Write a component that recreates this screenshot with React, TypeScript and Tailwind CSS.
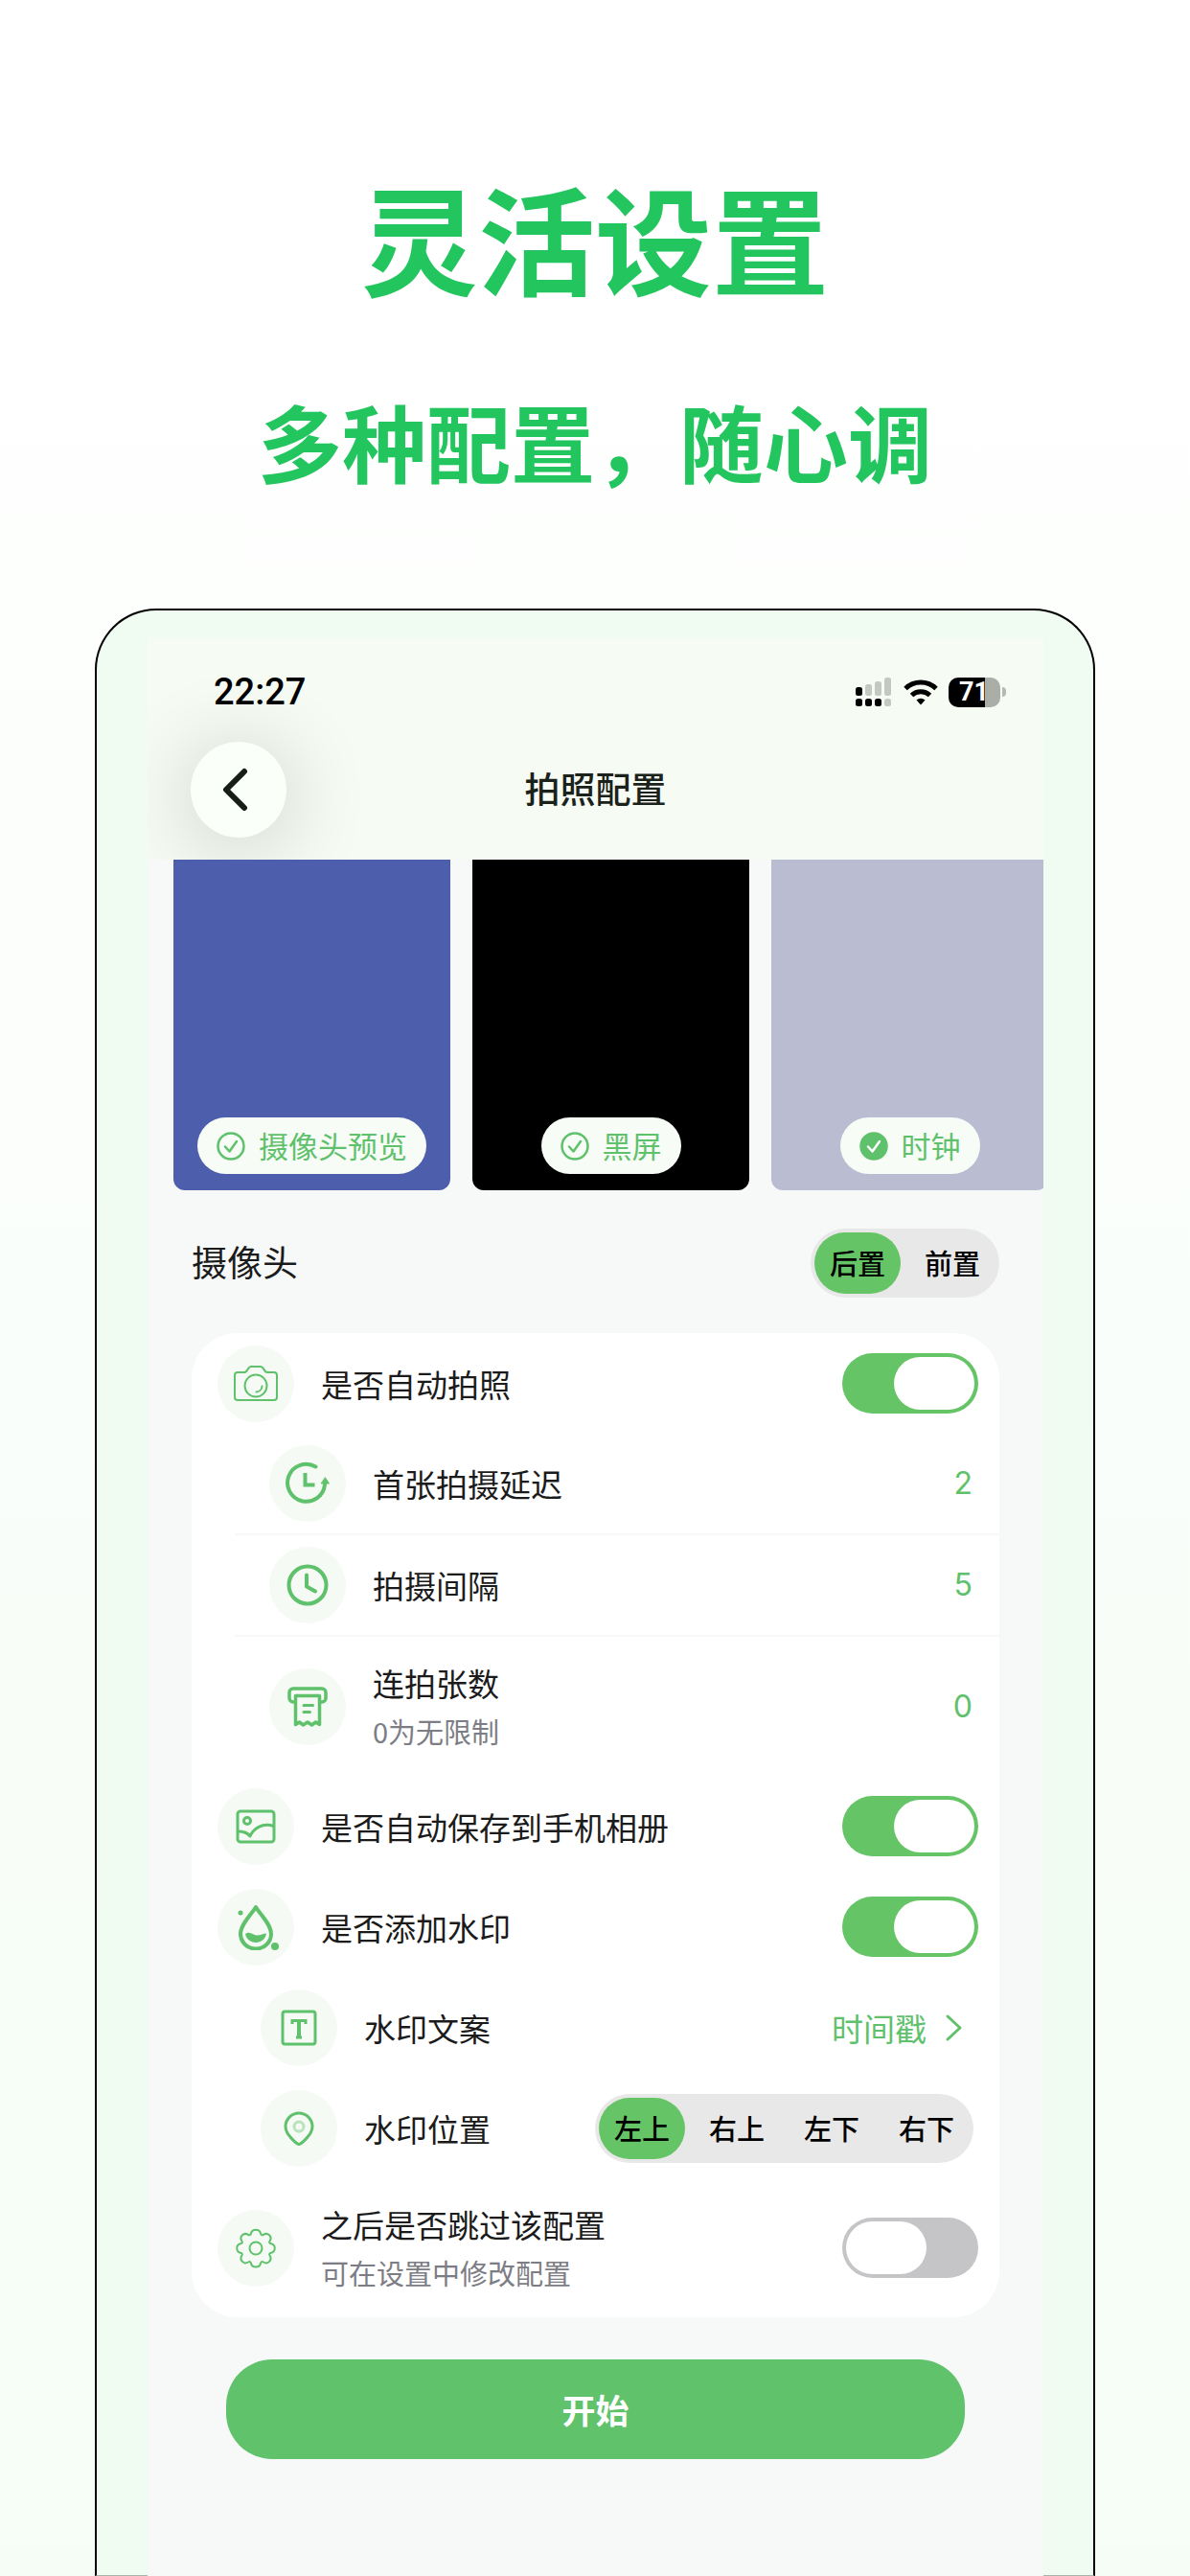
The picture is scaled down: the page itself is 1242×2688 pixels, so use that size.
import React, { useState } from 'react';
import { clsx } from 'clsx';

type IconProps = { children: React.ReactNode };

const IconBadge = ({ children }: IconProps) => (
  <div className="flex size-20 shrink-0 items-center justify-center rounded-full bg-[#f5faf4] text-[#5fc16c]">
    <svg viewBox="0 0 48 48" className="size-12" fill="none" stroke="currentColor" strokeLinecap="round" strokeLinejoin="round" aria-hidden="true">
      {children}
    </svg>
  </div>
);

const CameraIcon = () => (
  <IconBadge>
    <g strokeWidth="2">
      <path d="M5 12h7c2 0 2.500-1 3.500-3s2-3 4-3h9c2 0 3 1 4 3s1.500 3 3.500 3h7a3 3 0 0 1 3 3v23a3 3 0 0 1-3 3H5a3 3 0 0 1-3-3V15a3 3 0 0 1 3-3z" />
      <circle cx="24" cy="26" r="11.500" />
      <path d="M30.500 26.500a6.500 6.500 0 0 1-6 6" />
    </g>
  </IconBadge>
);

const DelayIcon = () => (
  <IconBadge>
    <g strokeWidth="4">
      <path d="M32.500 6.500A19.500 19.500 0 1 0 42 25" />
      <path d="M21.500 15v10.500h8" strokeLinecap="square" strokeLinejoin="miter" />
    </g>
    <path d="M42.500 18l4 6h-8z" fill="currentColor" strokeWidth="1" />
  </IconBadge>
);

const ClockIcon = () => (
  <IconBadge>
    <circle cx="24" cy="24" r="19.500" strokeWidth="4" />
    <path d="M23 13.500v12l9 5" strokeWidth="4" />
  </IconBadge>
);

const ReceiptIcon = () => (
  <IconBadge>
    <g strokeWidth="3.500">
      <path d="M10 19H9a4 4 0 0 1-4-4V9a4 4 0 0 1 4-4h30a4 4 0 0 1 4 4v6a4 4 0 0 1-4 4h-1" />
      <path d="M11.500 12.500h25v30l-4-2.500-4 3-4.500-3-4.500 3-4-3-4 2.500z" />
    </g>
    <path d="M20 22.500h9.500M20 29.500h6.500" strokeWidth="3" />
  </IconBadge>
);

const PhotoIcon = () => (
  <IconBadge>
    <g strokeWidth="3">
      <rect x="5" y="8" width="38" height="32" rx="3" />
      <circle cx="15" cy="18" r="3.500" />
      <path d="M5.500 29c5 0 9.500 1 12.500 5 3-7 13-15 24.500-10.500" />
    </g>
  </IconBadge>
);

const DropIcon = () => (
  <IconBadge>
    <path d="M24 3C20 10 8 21 8 31a16 15.500 0 0 0 32 0C40 21 28 10 24 3z" strokeWidth="4" />
    <path d="M13 31c5-3.500 8 1.500 12 1.500 4 0 7-2 10-2-1 6-5.500 9.500-11 9.500s-10-3.500-11-9z" fill="currentColor" strokeWidth="0" />
    <circle cx="8" cy="9" r="2.500" fill="currentColor" strokeWidth="0" />
    <circle cx="44" cy="44" r="4" fill="currentColor" strokeWidth="0" />
  </IconBadge>
);

const TextIcon = () => (
  <IconBadge>
    <rect x="7" y="7" width="34" height="34" rx="2.500" strokeWidth="3" />
    <g strokeLinecap="butt" strokeLinejoin="miter">
      <path d="M17 20v-3.500h14V20M21 34h6" strokeWidth="3" />
      <path d="M24 16v18" strokeWidth="4" />
    </g>
  </IconBadge>
);

const PinIcon = () => (
  <IconBadge>
    <path d="M24 40.500c-1.500 0-14-9.500-14-18.500a14 14 0 0 1 28 0c0 9-12.500 18.500-14 18.500z" strokeWidth="3" />
    <circle cx="24" cy="22" r="5" strokeWidth="3" opacity="0.400" />
  </IconBadge>
);

const GearIcon = () => (
  <IconBadge>
    <g strokeWidth="2">
      <path d="M19 8.500c1-5 9-5 10 0 .3 1.800 1.500 2.300 3 1.300 4.500-2.800 9.500 2 6.700 6.500-1 1.500-.5 2.700 1.300 3 5 1 5 8.500 0 9.500-1.800.3-2.300 1.500-1.300 3 2.800 4.500-2.200 9.500-6.700 6.700-1.500-1-2.700-.5-3 1.300-1 5-9 5-10 0-.3-1.800-1.500-2.300-3-1.300-4.500 2.800-9.500-2.200-6.700-6.700 1-1.500.5-2.700-1.300-3-5-1-5-8.500 0-9.500 1.800-.3 2.300-1.500 1.300-3-2.800-4.500 2.200-9.300 6.700-6.500 1.500 1 2.700.5 3-1.300z" />
      <circle cx="24" cy="24" r="6.500" />
    </g>
  </IconBadge>
);

const StatusBar = () => (
  <div className="flex items-center justify-between pr-[39px] pl-[69px]">
    <time className="font-[Roboto,sans-serif] text-[38px] leading-[44px] font-medium text-black">22:27</time>
    <div className="flex items-center">
      <svg viewBox="0 0 38 30" className="h-[30px] w-[38px]" aria-hidden="true">
        <g fill="#000">
          <rect x="0" y="10" width="7" height="9" rx="2.500" />
          <rect x="0" y="22" width="7" height="8" rx="2.500" />
          <rect x="10" y="22" width="7" height="8" rx="2.500" />
          <rect x="20" y="22" width="7" height="8" rx="2.500" />
        </g>
        <g fill="#c3c8c2">
          <rect x="10" y="7" width="7" height="12" rx="2.500" />
          <rect x="20" y="4" width="7" height="15" rx="2.500" />
          <rect x="30" y="0" width="7" height="19" rx="2.500" />
          <rect x="30" y="22" width="7" height="8" rx="2.500" />
        </g>
      </svg>
      <svg viewBox="0 0 36 28" className="ml-3 h-7 w-9" fill="none" stroke="#000" strokeWidth="5" aria-hidden="true">
        <path d="M2 10.500a23 23 0 0 1 32 0" />
        <path d="M8.500 17.500a14 14 0 0 1 19 0" />
        <path d="M18 27.500l-4.500-5a7 7 0 0 1 9 0z" fill="#000" strokeWidth="0" />
      </svg>
      <div className="ml-[11px] flex h-[31px] w-[54px] items-center rounded-[10px] bg-linear-to-r from-black from-70% to-[#a9aea8] to-70% pl-[11px]">
        <span className="font-[Roboto,sans-serif] text-[27px] leading-[31px] font-bold text-white">71</span>
      </div>
      <div className="ml-0.5 h-2.5 w-1 rounded-r-full bg-[#b5bab4]" />
    </div>
  </div>
);

const modes = [
  { name: '摄像头预览', color: 'bg-[#4d5fac]' },
  { name: '黑屏', color: 'bg-black' },
  { name: '时钟', color: 'bg-[#babdd2]' },
];

const ModeList = () => {
  const [active, setActive] = useState('时钟');
  return (
    <div className="flex gap-[23px] overflow-hidden pl-[27px]">
      {modes.map((m) => (
        <div key={m.name} className={clsx('flex h-[345px] w-[289px] shrink-0 items-end justify-center rounded-b-[12px] pb-[17px]', m.color)}>
          <button type="button" onClick={() => setActive(m.name)} className="flex h-[59px] items-center gap-3.5 rounded-full bg-[#f7fcf6] px-5 text-[31px] leading-10 text-[#5fc16c]">
            <svg viewBox="0 0 30 30" className="size-[30px]" fill="none" aria-hidden="true">
              <circle cx="15" cy="15" r="13.500" stroke="#5fc16c" strokeWidth="2.500" fill={active === m.name ? '#5fc16c' : 'none'} />
              <path d="M9 15.500l4.500 5L21 10" stroke={active === m.name ? '#fff' : '#5fc16c'} strokeWidth="2.500" strokeLinecap="round" strokeLinejoin="round" />
            </svg>
            <span className="pb-0.5">{m.name}</span>
          </button>
        </div>
      ))}
    </div>
  );
};

const Segmented = ({ label, options }: { label: string; options: string[] }) => {
  const [value, setValue] = useState(options[0]);
  return (
    <div role="group" aria-label={label} className="flex h-[72px] gap-[9px] rounded-full bg-[#e8e8e8] p-1">
      {options.map((o) => (
        <button
          key={o}
          type="button"
          aria-pressed={value === o}
          onClick={() => setValue(o)}
          className={clsx('w-[90px] rounded-full pb-0.5 text-[29px] leading-10 font-medium text-black', value === o && 'bg-[#65c466]')}
        >
          {o}
        </button>
      ))}
    </div>
  );
};

const Toggle = ({ id, on }: { id: string; on?: boolean }) => (
  <span className="relative block h-[63px] w-[142px] shrink-0">
    <input id={id} type="checkbox" role="switch" defaultChecked={on} className="peer size-full appearance-none rounded-full bg-[#c5c5c8] checked:bg-[#65c466]" />
    <span className="pointer-events-none absolute top-1 left-1 h-[55px] w-[84px] rounded-full bg-white peer-checked:right-1 peer-checked:left-auto" />
  </span>
);

interface RowProps {
  icon: React.ReactNode;
  title: string;
  hint?: string;
  htmlFor?: string;
  className?: string;
  children: React.ReactNode;
}

const Row = ({ icon, title, hint, htmlFor, className, children }: RowProps) => (
  <div className={clsx('flex items-center', className)}>
    {icon}
    <div className="ml-7 flex flex-1 flex-col gap-0.5">
      <label htmlFor={htmlFor} className="text-[33px] leading-[48px] text-[#1b1b1b]">{title}</label>
      {hint && <span className="text-[29px] leading-[48px] text-[#7d7d85]">{hint}</span>}
    </div>
    {children}
  </div>
);

const NumberField = ({ id, value }: { id: string; value: string }) => (
  <input id={id} inputMode="numeric" defaultValue={value} className="w-24 bg-transparent text-right font-[Inter,sans-serif] text-[32px] leading-10 text-[#5fc16c] outline-none" />
);

export default function App() {
  return (
    <main className="flex min-h-screen flex-col items-center bg-linear-to-b from-white to-[#f6fdf6] px-[99px] font-['Noto_Sans_CJK_SC',sans-serif]">
      <h1 className="pt-[156px] text-center text-[122px] leading-[180px] font-bold text-[#22c55e]">灵活设置</h1>
      <h2 className="mt-[58px] text-center text-[88px] leading-[130px] font-bold text-[#22c55e]">多种配置，随心调</h2>

      <div className="mt-[111px] flex w-full flex-1 flex-col rounded-t-[64px] border-2 border-b border-black border-b-[#a9b5aa] bg-[#f0fbf1] pt-7 pr-[52px] pl-[53px]">
        <section className="-mb-px flex flex-1 flex-col bg-[#f7f9f9]">
          <header className="flex h-[232px] flex-col overflow-hidden bg-[#f6fbf3] pt-[35px]">
            <StatusBar />
            <div className="mt-[30px] grid grid-cols-[100px_1fr_100px] items-center px-[45px]">
              <button type="button" aria-label="返回" className="flex size-[100px] items-center justify-center rounded-full bg-[#fbfffa] shadow-[0_8px_90px_rgba(0,0,0,0.2)]">
                <svg viewBox="0 0 48 48" className="size-12" fill="none" stroke="#161d16" strokeWidth="6" strokeLinecap="round" strokeLinejoin="round" aria-hidden="true">
                  <path d="M30 5L11 24l19 19" />
                </svg>
              </button>
              <h3 className="pb-1 text-center text-[37px] leading-[52px] font-medium text-[#1b211b]">拍照配置</h3>
            </div>
          </header>

          <ModeList />

          <div className="mt-10 flex items-center justify-between px-[46px]">
            <span className="pb-1 text-[37px] leading-[52px] text-[#1b1b1b]">摄像头</span>
            <Segmented label="摄像头" options={['后置', '前置']} />
          </div>

          <div className="mx-[46px] mt-[37px] rounded-[48px] bg-white">
            <Row icon={<CameraIcon />} title="是否自动拍照" htmlFor="auto" className="h-[105px] pr-[22px] pl-[27px]">
              <Toggle id="auto" on />
            </Row>
            <div className="ml-[45px]">
              <Row icon={<DelayIcon />} title="首张拍摄延迟" htmlFor="delay" className="h-[106px] border-b-2 border-[#f7f8f8] pr-7 pl-9">
                <NumberField id="delay" value="2" />
              </Row>
              <Row icon={<ClockIcon />} title="拍摄间隔" htmlFor="interval" className="h-[106px] border-b-2 border-[#f7f8f8] pr-7 pl-9">
                <NumberField id="interval" value="5" />
              </Row>
              <Row icon={<ReceiptIcon />} title="连拍张数" hint="0为无限制" htmlFor="count" className="h-[145px] pr-7 pl-9">
                <NumberField id="count" value="0" />
              </Row>
            </div>
            <Row icon={<PhotoIcon />} title="是否自动保存到手机相册" htmlFor="album" className="h-[105px] pr-[22px] pl-[27px]">
              <Toggle id="album" on />
            </Row>
            <Row icon={<DropIcon />} title="是否添加水印" htmlFor="mark" className="h-[105px] pr-[22px] pl-[27px]">
              <Toggle id="mark" on />
            </Row>
            <Row icon={<TextIcon />} title="水印文案" htmlFor="copy" className="h-[105px] pr-7 pl-[72px]">
              <button id="copy" type="button" className="flex items-center gap-3 text-[33px] leading-[48px] text-[#5fc16c]">
                时间戳
                <svg viewBox="0 0 36 36" className="size-9" fill="none" stroke="currentColor" strokeWidth="3" strokeLinecap="round" strokeLinejoin="round" aria-hidden="true">
                  <path d="M10 6l13 12-13 12" />
                </svg>
              </button>
            </Row>
            <Row icon={<PinIcon />} title="水印位置" className="h-[105px] pr-[27px] pl-[72px]">
              <Segmented label="水印位置" options={['左上', '右上', '左下', '右下']} />
            </Row>
            <Row icon={<GearIcon />} title="之后是否跳过该配置" hint="可在设置中修改配置" htmlFor="skip" className="h-[145px] pr-[22px] pl-[27px]">
              <Toggle id="skip" />
            </Row>
          </div>

          <button type="button" className="mx-[82px] mt-11 h-[104px] rounded-[48px] bg-[#60c26b] text-[35px] leading-[52px] font-bold text-white">开始</button>
        </section>
      </div>
    </main>
  );
}
